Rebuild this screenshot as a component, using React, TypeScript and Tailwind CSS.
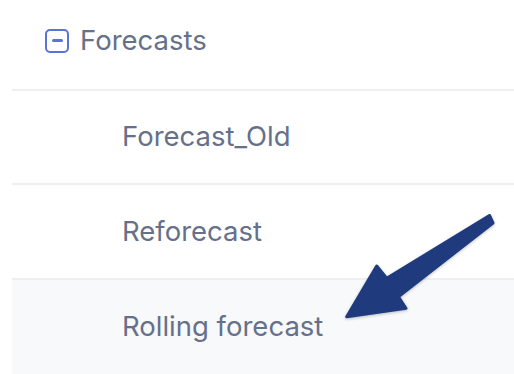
const rows = ["Forecast_Old", "Reforecast", "Rolling forecast"];

function MinusBox() {
  return (
    <span className="flex h-[24px] w-[24px] items-center justify-center rounded-[5px] border-[2.5px] border-[#5a73d4]">
      <span className="h-[2.5px] w-[11px] rounded-full bg-[#5a73d4]" />
    </span>
  );
}

function Arrow() {
  return (
    <svg
      className="pointer-events-none absolute left-0 top-0"
      width="514"
      height="374"
      viewBox="0 0 514 374"
      style={{ filter: "drop-shadow(0px 1px 1.5px rgba(0,0,0,0.25))" }}
    >
      <polygon
        points="346.7,316.7 376.7,266 386.7,278.3 489.5,215.5 493,223 398.3,296.7 406,308.3"
        fill="#1f3b7e"
        stroke="#1f3b7e"
        strokeWidth="3"
        strokeLinejoin="round"
      />
    </svg>
  );
}

export default function App() {
  return (
    <div
      className="relative h-[374px] w-[514px] overflow-hidden bg-white"
      style={{ fontFamily: "Inter, 'Noto Sans', sans-serif" }}
    >
      <div className="pl-[12px]">
        <div className="flex h-[89px] items-center gap-[11px] pb-[8px] pl-[33px] text-[27.5px] text-[#66708a]">
          <MinusBox />
          <span>Forecasts</span>
        </div>
        {rows.map((label, i) => (
          <div
            key={label}
            className={`flex items-center border-t-2 border-[#eeeff1] pl-[110px] text-[27.5px] text-[#66708a] ${
              i === 2 ? "h-[96px] bg-[#f8f9fb]" : i === 0 ? "h-[94px]" : "h-[95px]"
            }`}
          >
            {label}
          </div>
        ))}
      </div>
      <Arrow />
    </div>
  );
}
